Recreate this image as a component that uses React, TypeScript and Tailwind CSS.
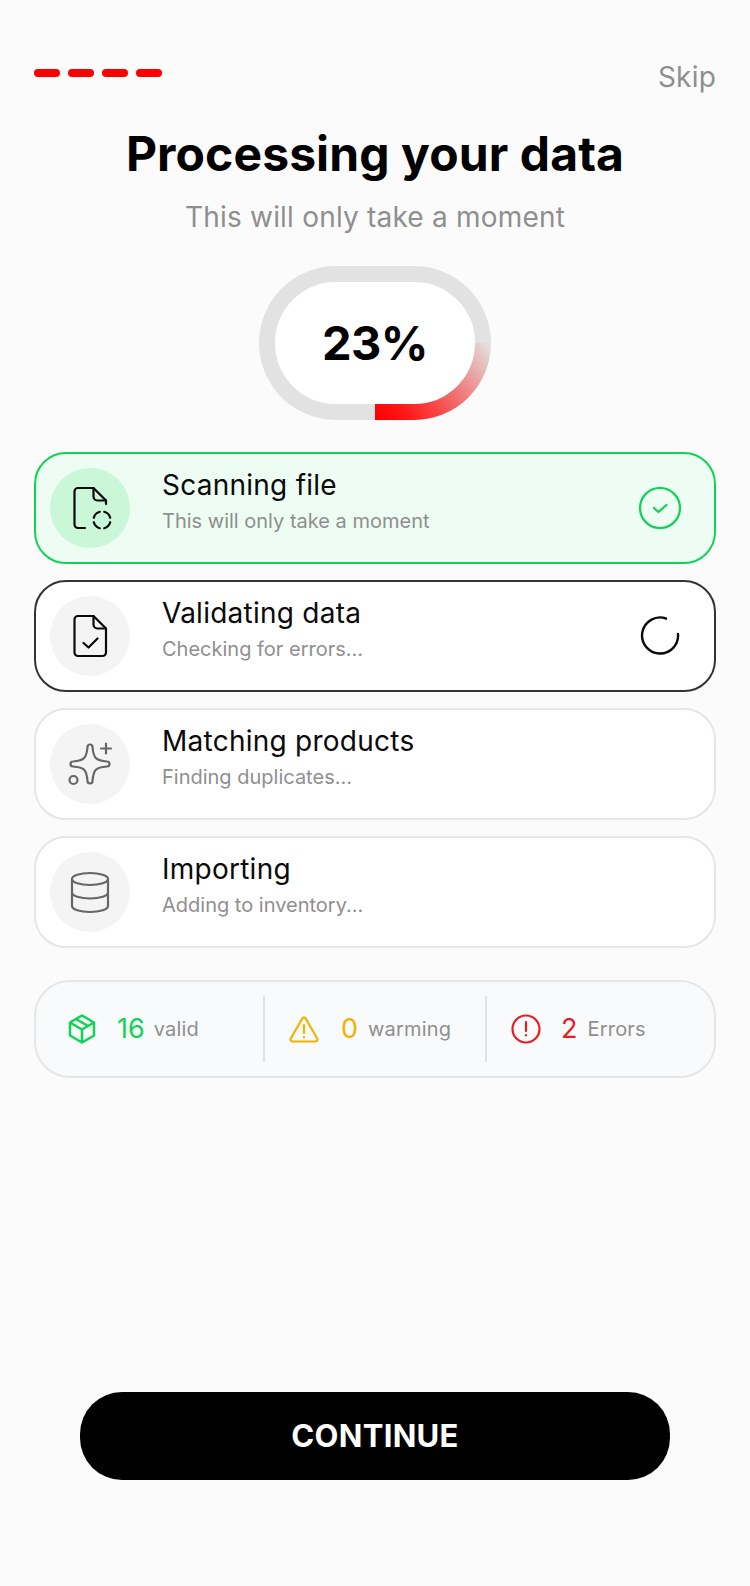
const steps = [
  { title: 'Scanning file', sub: 'This will only take a moment', state: 'done', icon: <FileScanIcon /> },
  { title: 'Validating data', sub: 'Checking for errors...', state: 'active', icon: <FileCheckIcon /> },
  { title: 'Matching products', sub: 'Finding duplicates...', state: 'idle', icon: <SparkleIcon /> },
  { title: 'Importing', sub: 'Adding to inventory...', state: 'idle', icon: <DatabaseIcon /> },
];

// step icons all share the 80x80 box of the round badge
function FileScanIcon() {
  return (
    <svg width="80" height="80" viewBox="0 0 80 80" fill="none" stroke="#0a0a0a" strokeWidth="2.200" strokeLinecap="round" strokeLinejoin="round">
      <path d="M35 60h-7a3.500 3.500 0 0 1-3.500-3.500v-33A3.500 3.500 0 0 1 28 20h15.500L56 32.500V36" />
      <path d="M43.500 20v8.500a4 4 0 0 0 4 4H56" />
      <path d="M43.800 49.800A8.500 8.500 0 0 1 49.800 43.800M54.200 43.800a8.500 8.500 0 0 1 6 6M60.200 54.200a8.500 8.500 0 0 1-6 6M49.800 60.200a8.500 8.500 0 0 1-6-6" />
    </svg>
  );
}

function FileCheckIcon() {
  return (
    <svg width="80" height="80" viewBox="0 0 80 80" fill="none" stroke="#0a0a0a" strokeWidth="2.200" strokeLinecap="round" strokeLinejoin="round">
      <path d="M28 60a3.500 3.500 0 0 1-3.500-3.500v-33A3.500 3.500 0 0 1 28 20h15.500L56 32.500v24a3.500 3.500 0 0 1-3.500 3.500z" />
      <path d="M43.500 20v8.500a4 4 0 0 0 4 4H56" />
      <path d="M33.500 47l5 4.500 9-9" />
    </svg>
  );
}

function SparkleIcon() {
  return (
    <svg width="80" height="80" viewBox="0 0 80 80" fill="none" stroke="#666666" strokeWidth="2.200" strokeLinecap="round" strokeLinejoin="round">
      <path d="M37.500 23a2.500 2.500 0 0 1 5 0c1 11 3 13.500 14.500 14.500a2.500 2.500 0 0 1 0 5c-11.500 1-13.500 3-14.500 14.500a2.500 2.500 0 0 1-5 0c-1-11.500-3-13.500-14.500-14.500a2.500 2.500 0 0 1 0-5c11.500-1 13.500-3.500 14.500-14.500z" />
      <path d="M56 19.500v10M51 24.500h10" />
      <circle cx="23.500" cy="56" r="4" />
    </svg>
  );
}

function DatabaseIcon() {
  return (
    <svg width="80" height="80" viewBox="0 0 80 80" fill="none" stroke="#666666" strokeWidth="2.200" strokeLinejoin="round">
      <ellipse cx="40" cy="27" rx="18" ry="6" />
      <path d="M22 27v27c0 3.300 8 6 18 6s18-2.700 18-6V27" />
      <path d="M22 40.500c0 3.300 8 6 18 6s18-2.700 18-6" />
    </svg>
  );
}

function CubeIcon() {
  return (
    <svg width="28" height="30" viewBox="0 0 28 30" fill="none" stroke="#10d356" strokeWidth="2.500" strokeLinejoin="round">
      <path d="M14 1.500l12 7v13l-12 7-12-7v-13z" />
      <path d="M2 8.500l12 7 12-7M14 15.500v13M8 5l12 7" />
    </svg>
  );
}

function WarnIcon() {
  return (
    <svg width="30" height="28" viewBox="0 0 30 28" fill="none" stroke="#f2b200" strokeWidth="2.200" strokeLinecap="round" strokeLinejoin="round">
      <path d="M13.300 3.500a2 2 0 0 1 3.400 0l11.500 20a2 2 0 0 1-1.700 3h-23a2 2 0 0 1-1.700-3z" />
      <path d="M15 10v8M15 22v.5" />
    </svg>
  );
}

function ErrorIcon() {
  return (
    <svg width="30" height="30" viewBox="0 0 30 30" fill="none" stroke="#e81c24" strokeWidth="2.200" strokeLinecap="round">
      <circle cx="15" cy="15" r="13.500" />
      <path d="M15 8v9M15 21v.5" />
    </svg>
  );
}

function Gauge() {
  return (
    <div className="relative w-[232px] h-[154px] flex items-center justify-center">
      <svg className="absolute inset-0" width="232" height="154" viewBox="0 0 232 154" fill="none">
        <defs>
          <linearGradient id="fade" gradientUnits="userSpaceOnUse" x1="116" y1="150" x2="224" y2="70">
            <stop offset="0" stopColor="#ff0000" />
            <stop offset="0.2" stopColor="#ff1a1a" />
            <stop offset="1" stopColor="#ff0000" stopOpacity="0" />
          </linearGradient>
        </defs>
        <rect x="8" y="8" width="216" height="138" rx="69" fill="#ffffff" stroke="#e2e2e2" strokeWidth="16" />
        <path d="M116 146h39a69 69 0 0 0 69-69" stroke="url(#fade)" strokeWidth="16" />
      </svg>
      <span className="relative text-[47px] font-bold tracking-[-0.5px] text-black">23%</span>
    </div>
  );
}

function StepCard({ step }: { step: (typeof steps)[number] }) {
  const { state } = step;
  return (
    <div
      className={`h-[112px] rounded-[32px] border-2 pl-[14px] pr-[33px] flex items-center ${
        state === 'done'
          ? 'bg-[#eefdf3] border-[#10d356]'
          : state === 'active'
            ? 'bg-white border-[#333333]'
            : 'bg-white border-[#e6e6e6]'
      }`}
    >
      <div
        className={`w-[80px] h-[80px] rounded-full flex items-center justify-center shrink-0 ${
          state === 'done' ? 'bg-[#c9f7d8]' : 'bg-[#f4f4f4]'
        }`}
      >
        {step.icon}
      </div>
      <div className="ml-[32px] flex-1 -mt-[15px]">
        <div className="text-[28px] leading-[36px] font-normal tracking-[0.25px] text-[#0a0a0a]">{step.title}</div>
        <div className="text-[20px] leading-[28px] mt-[4px] text-[#8f8f8f]">{step.sub}</div>
      </div>
      {state === 'done' && (
        <svg width="42" height="42" viewBox="0 0 42 42" fill="none" stroke="#10d356" strokeWidth="2.200" strokeLinecap="round" strokeLinejoin="round">
          <circle cx="21" cy="21" r="20" />
          <path d="M15 21l4.500 4 8-7" />
        </svg>
      )}
      {state === 'active' && (
        <svg className="mr-[1px]" width="40" height="40" viewBox="0 0 40 40" fill="none" stroke="#0a0a0a" strokeWidth="2.400" strokeLinecap="round">
          <path d="M26 2.500A18 18 0 1 0 38 18" />
        </svg>
      )}
    </div>
  );
}

export default function App() {
  return (
    <div className="w-[750px] h-[1586px] bg-[#fbfbfb] flex flex-col font-['Inter',sans-serif]">
      <div className="flex justify-between items-start px-[34px] pt-[60px]">
        <div className="flex gap-[8px] mt-[9px]">
          <div className="w-[26px] h-[8px] rounded-full bg-[#ff0000]" />
          <div className="w-[26px] h-[8px] rounded-full bg-[#ff0000]" />
          <div className="w-[26px] h-[8px] rounded-full bg-[#ff0000]" />
          <div className="w-[26px] h-[8px] rounded-full bg-[#ff0000]" />
        </div>
        <div className="text-[28px] leading-[34px] tracking-[0.2px] text-[#8f8f8f]">Skip</div>
      </div>

      <h1 className="mt-[30px] text-center text-[48px] leading-[60px] font-bold tracking-[0.1px] text-black">Processing your data</h1>
      <p className="mt-[15px] text-center text-[28px] leading-[36px] tracking-[0.2px] text-[#8f8f8f]">This will only take a moment</p>

      <div className="mt-[31px] flex justify-center">
        <Gauge />
      </div>

      <div className="mt-[32px] px-[34px] flex flex-col gap-[16px]">
        {steps.map((step) => (
          <StepCard key={step.title} step={step} />
        ))}
      </div>

      <div className="mt-[32px] mx-[34px] h-[98px] rounded-[36px] border-2 border-[#e6e6e6] bg-[#f9fafb] flex items-center">
        <div className="w-[229px] h-[66px] pl-[32px] flex items-center border-r-2 border-[#e2e2e2]">
          <CubeIcon />
          <span className="ml-[21px] text-[27px] text-[#10d356]">16</span>
          <span className="ml-[9px] text-[20px] tracking-[0.2px] text-[#8f8f8f]">valid</span>
        </div>
        <div className="w-[222px] h-[66px] pl-[24px] flex items-center border-r-2 border-[#e2e2e2]">
          <WarnIcon />
          <span className="ml-[22px] text-[27px] text-[#f2b200]">0</span>
          <span className="ml-[10px] text-[20px] tracking-[0.2px] text-[#8f8f8f]">warming</span>
        </div>
        <div className="pl-[24px] flex items-center">
          <ErrorIcon />
          <span className="ml-[20px] text-[27px] text-[#e81c24]">2</span>
          <span className="ml-[10px] text-[20px] tracking-[0.2px] text-[#8f8f8f]">Errors</span>
        </div>
      </div>

      <div className="mt-auto mb-[106px] px-[80px]">
        <button className="w-full h-[88px] rounded-[42px] bg-black text-white text-[31px] tracking-[0.3px] font-bold">CONTINUE</button>
      </div>
    </div>
  );
}
